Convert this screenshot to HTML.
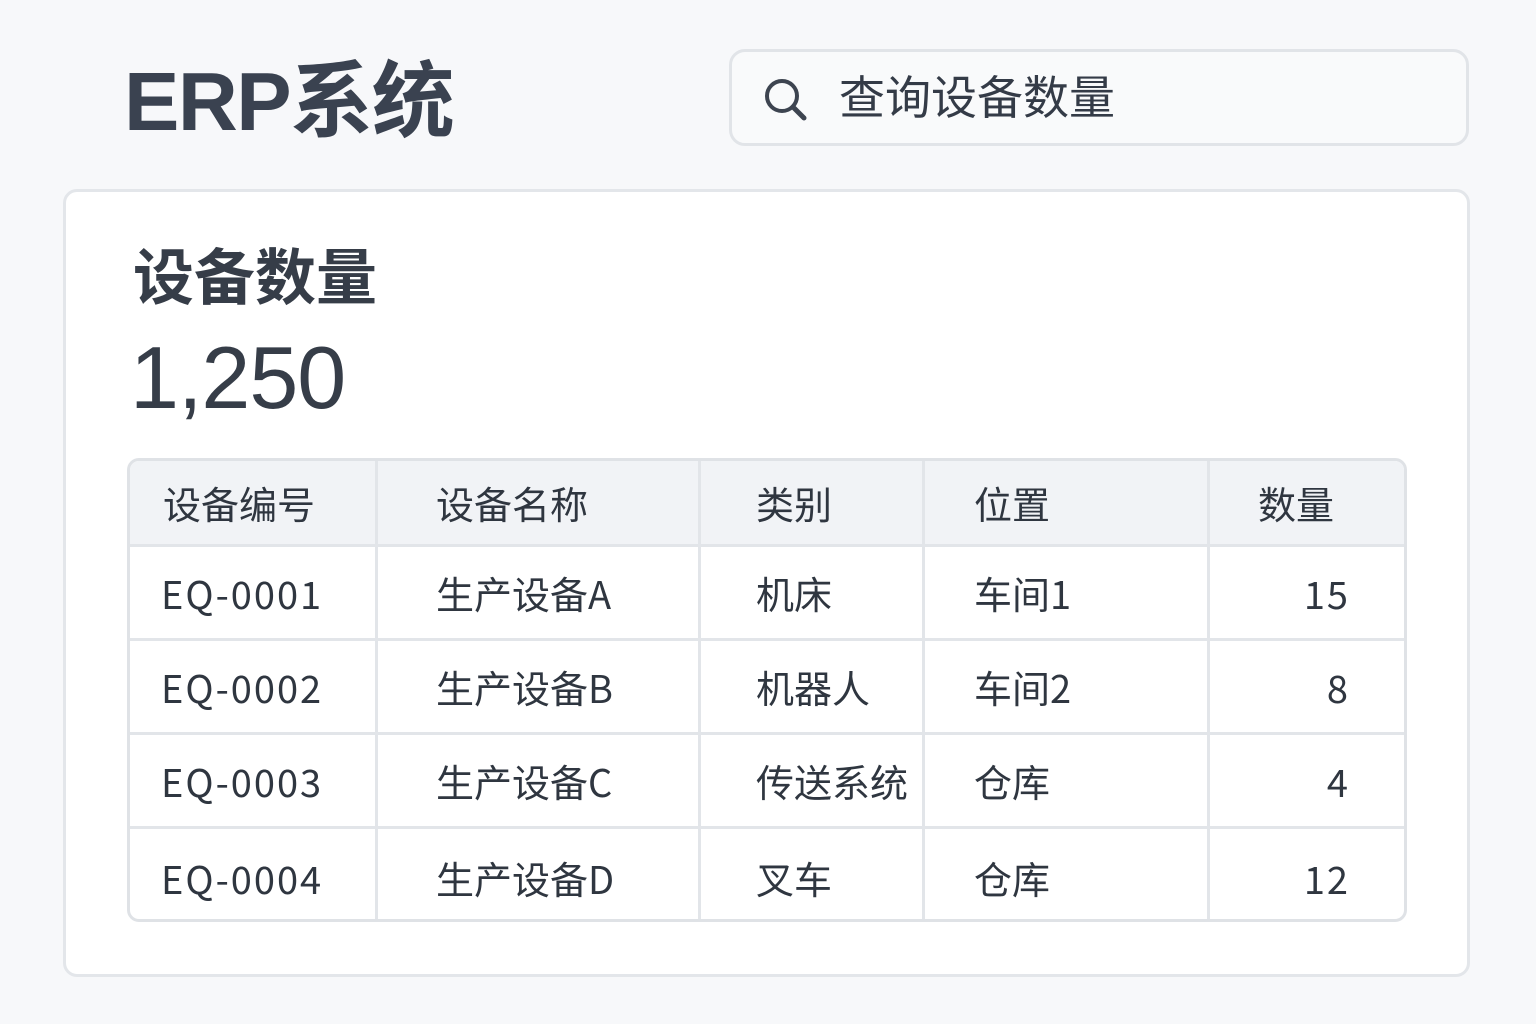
<!DOCTYPE html>
<html><head><meta charset="utf-8"><style>
*{margin:0;padding:0;box-sizing:border-box}
body{width:1536px;height:1024px;background:#f7f8fa;font-family:"Liberation Sans","Noto Sans CJK SC",sans-serif;color:#343b47;position:relative;overflow:hidden}
.title{position:absolute;left:124px;top:52px;font-size:83px;font-weight:bold;color:#3a4250;letter-spacing:-1.5px;line-height:100px}
.search{position:absolute;left:729px;top:49px;width:740px;height:97px;border:3px solid #e1e4e8;border-radius:16px;background:#f9fafb}
.search svg{position:absolute;left:30px;top:24px}
.search span{position:absolute;left:107px;top:18px;font-size:46px;line-height:56px;color:#343b47}
.card{position:absolute;left:63px;top:189px;width:1407px;height:788px;background:#fff;border:3px solid #e3e6ea;border-radius:14px}
.h2{position:absolute;left:133px;top:240px;font-size:61px;font-weight:bold;line-height:76px;color:#363d48}
.num{position:absolute;left:130px;top:328px;font-size:88px;line-height:100px;font-weight:500;color:#363d48;letter-spacing:-1px}
.tbl{position:absolute;left:127px;top:458px;width:1280px;height:464px;border:3px solid #dfe2e6;border-radius:12px;overflow:hidden;background:#fff;font-family:"Noto Sans CJK SC","Liberation Sans",sans-serif}
.row{position:absolute;left:0;width:1280px;border-bottom:3px solid #e2e5e9}
.hd{background:#f1f3f6}
.c{position:absolute;top:0;height:100%;font-size:38px;display:flex;align-items:center;color:#2f3640}
.l{letter-spacing:2px}
.v{position:absolute;top:0;width:3px;height:464px;background:#e2e5e9}
</style></head><body>
<div class="title">ERP系统</div>
<div class="search">
<svg width="48" height="48" viewBox="0 0 48 48"><circle cx="20" cy="20" r="15" fill="none" stroke="#3d4450" stroke-width="4"/><path d="M31 31 L42 42" stroke="#3d4450" stroke-width="5" stroke-linecap="round"/></svg>
<span>查询设备数量</span></div>
<div class="card"></div>
<div class="h2">设备数量</div>
<div class="num">1,250</div>
<div class="tbl">
<div class="row hd" style="top:0;height:86px">
<div class="c" style="left:33px">设备编号</div><div class="c" style="left:306px">设备名称</div><div class="c" style="left:626px">类别</div><div class="c" style="left:844px">位置</div><div class="c" style="left:1128px">数量</div></div>
<div class="row" style="top:86px;height:94px">
<div class="c l" style="left:31px">EQ-0001</div><div class="c" style="left:306px">生产设备A</div><div class="c" style="left:626px">机床</div><div class="c" style="left:844px">车间1</div><div class="c l" style="right:60px">15</div></div>
<div class="row" style="top:180px;height:94px">
<div class="c l" style="left:31px">EQ-0002</div><div class="c" style="left:306px">生产设备B</div><div class="c" style="left:626px">机器人</div><div class="c" style="left:844px">车间2</div><div class="c l" style="right:60px">8</div></div>
<div class="row" style="top:274px;height:94px">
<div class="c l" style="left:31px">EQ-0003</div><div class="c" style="left:306px">生产设备C</div><div class="c" style="left:626px">传送系统</div><div class="c" style="left:844px">仓库</div><div class="c l" style="right:60px">4</div></div>
<div class="row" style="top:368px;height:96px;border-bottom:none">
<div class="c l" style="left:31px">EQ-0004</div><div class="c" style="left:306px">生产设备D</div><div class="c" style="left:626px">叉车</div><div class="c" style="left:844px">仓库</div><div class="c l" style="right:60px">12</div></div>
<div class="v" style="left:245px"></div><div class="v" style="left:568px"></div><div class="v" style="left:792px"></div><div class="v" style="left:1077px"></div>
</div>
</body></html>
